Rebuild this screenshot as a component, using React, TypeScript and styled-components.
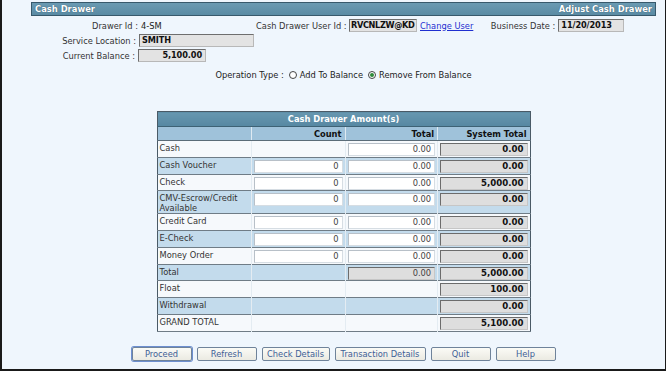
import React from "react";
import styled, { createGlobalStyle } from "styled-components";

const Global = createGlobalStyle`
  html, body { margin: 0; padding: 0; }
  body { background: #fff; font-family: "DejaVu Sans", Verdana, sans-serif; }
`;

const Frame = styled.div`
  box-sizing: border-box;
  width: 666px;
  height: 371px;
  background: #eff6fd;
  border-left: 2px solid #1a1a1a;
  border-right: 1px solid #1a1a1a;
  border-bottom: 2px solid #1a1a1a;
  padding: 2px 9px 0 29px;
  font-size: 8.3px;
  color: #222;
  display: flex;
  flex-direction: column;
`;

const TitleBar = styled.div`
  height: 12px;
  background: linear-gradient(#6a9ab2, #5a8ba4);
  border: 1px solid #37596c;
  display: flex;
  justify-content: space-between;
  align-items: center;
  padding: 0 3px;
  color: #fff;
  font-weight: bold;
  font-size: 8.4px;
  text-shadow: 0 0 1px #2c4a5a;
`;

const InfoRow = styled.div`
  display: flex;
  align-items: center;
  height: 15px;
`;

const Label = styled.span<{ $w: number }>`
  width: ${(p) => p.$w}px;
  text-align: right;
  padding-right: 3px;
  box-sizing: border-box;
  white-space: nowrap;
  color: #333;
`;

const Plain = styled.span<{ $w?: number }>`
  width: ${(p) => (p.$w ? `${p.$w}px` : "auto")};
  white-space: nowrap;
`;

const ValueBox = styled.span<{ $w: number; $right?: boolean; $tight?: boolean }>`
  box-sizing: border-box;
  width: ${(p) => p.$w}px;
  height: 13px;
  line-height: 11px;
  background: #e3e3e3;
  border: 1px solid #b8b8b8;
  border-top-color: #6e6e6e;
  border-left-color: #6e6e6e;
  font-weight: bold;
  font-size: 8.2px;
  letter-spacing: ${(p) => (p.$tight ? "-0.35px" : "-0.1px")};
  padding: 0 3px 0 ${(p) => (p.$tight ? "1px" : "2px")};
  text-align: ${(p) => (p.$right ? "right" : "left")};
  white-space: nowrap;
  color: #111;
`;

const Link = styled.a`
  color: #1f2fd0;
  text-decoration: underline;
  margin-left: 3px;
  white-space: nowrap;
`;

const OpRow = styled.div`
  display: flex;
  justify-content: center;
  align-items: center;
  height: 14px;
  margin-top: 5px;
  gap: 3px;
`;

const Radio = styled.span<{ $on?: boolean }>`
  box-sizing: border-box;
  width: 8px;
  height: 8px;
  border-radius: 50%;
  border: 1px solid #444;
  background: #fff;
  display: inline-flex;
  align-items: center;
  justify-content: center;
  margin-left: 2px;
  &::after {
    content: "";
    width: 4px;
    height: 4px;
    border-radius: 50%;
    background: ${(p) => (p.$on ? "#2e8a3a" : "transparent")};
  }
`;

const TableWrap = styled.div`
  display: flex;
  justify-content: center;
  margin-top: 29px;
`;

const Table = styled.table`
  width: 374px;
  border-collapse: collapse;
  border: 1px solid #4a5a66;
  font-size: 8.3px;
`;

const TitleCell = styled.th`
  height: 14px;
  padding: 0;
  background: linear-gradient(#6797b0, #5788a2);
  color: #fff;
  font-weight: bold;
  text-align: center;
  border-bottom: 1px solid #3e6275;
`;

const HeadCell = styled.th<{ $w: number }>`
  width: ${(p) => p.$w}px;
  height: 13px;
  padding: 0 3px;
  background: #9fc2da;
  color: #111;
  font-weight: bold;
  text-align: right;
  border-left: 1px solid #dfeaf2;
  border-bottom: 1px solid #5b6c78;
  &:first-child { border-left: none; }
`;

const Row = styled.tr<{ $alt: boolean; $h: number }>`
  height: ${(p) => p.$h}px;
  background: ${(p) => (p.$alt ? "#c3dbec" : "#f6f9fc")};
  border-bottom: 1px solid #6f7c86;
`;

const NameCell = styled.td`
  padding: 0 2px;
  vertical-align: top;
  line-height: 10px;
  padding-top: 2px;
  color: #333;
  border-right: 1px solid #e4ecf2;
`;

const Cell = styled.td`
  padding: 0 2px;
  vertical-align: top;
  padding-top: 2px;
  border-right: 1px solid #e4ecf2;
  &:last-child { border-right: none; }
`;

const Field = styled.div<{ $grey?: boolean; $bold?: boolean }>`
  box-sizing: border-box;
  height: 13px;
  line-height: 11px;
  padding: 0 3px;
  text-align: right;
  background: ${(p) => (p.$grey ? "#dedede" : "#fff")};
  border: 1px solid ${(p) => (p.$grey ? "#c6c6c6" : "#d6dde3")};
  border-top-color: ${(p) => (p.$grey ? "#6c6c6c" : "#b8c0c8")};
  border-left-color: ${(p) => (p.$grey ? "#6c6c6c" : "#b8c0c8")};
  font-weight: ${(p) => (p.$bold ? "bold" : "normal")};
  color: ${(p) => (p.$bold ? "#111" : "#444")};
  font-size: ${(p) => (p.$bold ? "8.6px" : "8.3px")};
`;

const Buttons = styled.div`
  display: flex;
  justify-content: center;
  gap: 5px;
  margin-top: 15px;
`;

const Btn = styled.button<{ $w: number; $focus?: boolean }>`
  box-sizing: border-box;
  width: ${(p) => p.$w}px;
  height: 14px;
  padding: 0;
  font-family: "DejaVu Sans", Verdana, sans-serif;
  font-size: 8.3px;
  color: #3e6096;
  background: linear-gradient(#fbfbf6, #ebeae2);
  border: 1px solid #6f839a;
  border-radius: 2px;
  box-shadow: ${(p) => (p.$focus ? "0 0 0 1px #6d8fd0" : "none")};
`;

type Line = {
  name: string;
  count?: boolean;
  total?: "input" | "grey";
  sys?: string;
  h: number;
};

const lines: Line[] = [
  { name: "Cash", total: "input", sys: "0.00", h: 17 },
  { name: "Cash Voucher", count: true, total: "input", sys: "0.00", h: 17 },
  { name: "Check", count: true, total: "input", sys: "5,000.00", h: 16 },
  { name: "CMV-Escrow/Credit Available", count: true, total: "input", sys: "0.00", h: 22 },
  { name: "Credit Card", count: true, total: "input", sys: "0.00", h: 17 },
  { name: "E-Check", count: true, total: "input", sys: "0.00", h: 17 },
  { name: "Money Order", count: true, total: "input", sys: "0.00", h: 17 },
  { name: "Total", total: "grey", sys: "5,000.00", h: 16 },
  { name: "Float", sys: "100.00", h: 17 },
  { name: "Withdrawal", sys: "0.00", h: 17 },
  { name: "GRAND TOTAL", sys: "5,100.00", h: 17 },
];

export default function App() {
  return (
    <>
      <Global />
      <Frame>
        <TitleBar>
          <span>Cash Drawer</span>
          <span>Adjust Cash Drawer</span>
        </TitleBar>
        <InfoRow style={{ marginTop: 2 }}>
          <Label $w={110}>Drawer Id :</Label>
          <Plain $w={115}>4-SM</Plain>
          <Label $w={93}>Cash Drawer User Id :</Label>
          <ValueBox $w={68} $tight>RVCNLZW@KD</ValueBox>
          <Link href="#">Change User</Link>
          <Label $w={85}>Business Date :</Label>
          <ValueBox $w={66}>11/20/2013</ValueBox>
        </InfoRow>
        <InfoRow>
          <Label $w={108}>Service Location :</Label>
          <ValueBox $w={115}>SMITH</ValueBox>
        </InfoRow>
        <InfoRow>
          <Label $w={107}>Current Balance :</Label>
          <ValueBox $w={68} $right>
            5,100.00
          </ValueBox>
        </InfoRow>
        <OpRow>
          <span>Operation Type :</span>
          <Radio />
          <span>Add To Balance</span>
          <Radio $on />
          <span>Remove From Balance</span>
        </OpRow>
        <TableWrap>
          <Table>
            <thead>
              <tr>
                <TitleCell colSpan={4}>Cash Drawer Amount(s)</TitleCell>
              </tr>
              <tr>
                <HeadCell $w={93}></HeadCell>
                <HeadCell $w={95}>Count</HeadCell>
                <HeadCell $w={95}>Total</HeadCell>
                <HeadCell $w={91}>System Total</HeadCell>
              </tr>
            </thead>
            <tbody>
              {lines.map((l, i) => (
                <Row key={l.name} $alt={i % 2 === 1} $h={l.h}>
                  <NameCell>{l.name}</NameCell>
                  <Cell>{l.count ? <Field>0</Field> : null}</Cell>
                  <Cell>
                    {l.total === "input" ? (
                      <Field>0.00</Field>
                    ) : l.total === "grey" ? (
                      <Field $grey>0.00</Field>
                    ) : null}
                  </Cell>
                  <Cell>
                    <Field $grey $bold>
                      {l.sys}
                    </Field>
                  </Cell>
                </Row>
              ))}
            </tbody>
          </Table>
        </TableWrap>
        <Buttons>
          <Btn $w={60} $focus>Proceed</Btn>
          <Btn $w={60}>Refresh</Btn>
          <Btn $w={68}>Check Details</Btn>
          <Btn $w={91}>Transaction Details</Btn>
          <Btn $w={60}>Quit</Btn>
          <Btn $w={60}>Help</Btn>
        </Buttons>
      </Frame>
    </>
  );
}
